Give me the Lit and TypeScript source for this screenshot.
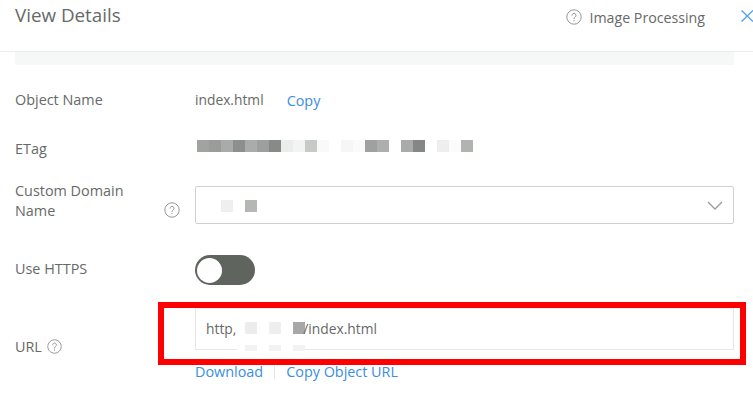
import { LitElement, html, css } from "lit";
import { customElement } from "lit/decorators.js";

const help = (size: number) => html`<svg class="help" width=${size} height=${size} viewBox="0 0 16 16" fill="none">
  <circle cx="8" cy="8" r="7.2" stroke="#8a8a8a" stroke-width="0.9"/>
  <path d="M6 6.3a2 2 0 1 1 3.1 1.7c-.7.5-1.1.9-1.1 1.7" stroke="#8a8a8a" stroke-width="0.9" stroke-linecap="round"/>
  <circle cx="8" cy="11.6" r=".6" fill="#8a8a8a"/>
</svg>`;

const etag = ["#a1a3a1","#999c99","#a9abaa","#8b908c","#aaacab","#9c9f9d","#868b87","#ebecec","#f2f4f3","#c5cac7","#f9f9f9","#fff","#f5f6f5","#fafafa","#9fa1a0","#adafae","#fff","#a9abaa","#858786","#fff","#eeeeee","#fbfbfb","#b1b3b1"];

const mosaic = (colors: string[]) => html`<div class="mosaic">${colors.map((c) => html`<i style="background:${c}"></i>`)}</div>`;

@customElement("app-root")
export class AppRoot extends LitElement {
  static styles = css`
    :host { display: block; width: 753px; height: 401px; overflow: hidden; background: #fff; position: relative;
      font-family: "Open Sans", "Liberation Sans", sans-serif; font-size: 14.4px; color: #666a67; }
    .head { height: 52px; box-sizing: border-box; border-bottom: 1px solid #eeeeee; display: flex; align-items: flex-start; padding-left: 15px; }
    .title { font-size: 18.8px; line-height: 31px; }
    .tools { margin-left: auto; display: flex; align-items: center; gap: 8px; height: 34px; font-size: 14.2px; }
    .close { margin-left: 28px; margin-bottom: 3px; width: 12px; height: 14px; display: block; }
    .body { padding: 0 19px 0 15px; }
    .notice { height: 13px; background: #f5f8f6; margin-bottom: 20px; }
    .row { display: grid; grid-template-columns: 180px 1fr; align-items: center; }
    .label { display: block; line-height: 20px; }
    .r1 { height: 30px; margin-bottom: 20px; }
    .r2 { height: 30px; margin-bottom: 16px; }
    .r2 .label { margin-bottom: 2px; }
    .r2 .mosaic { margin: 0 0 8px 2px; }
    .r3 { height: 43px; margin-bottom: 31px; align-items: start; }
    .r4 { height: 30px; margin-bottom: 23px; }
    .r4 .label { margin-bottom: 2px; }
    .inline { display: flex; align-items: center; gap: 23px; }
    .name { font-size: 13.8px; margin-bottom: 1px; }
    a { color: #3b8ee0; text-decoration: none; }
    .mosaic { display: flex; }
    .mosaic i { width: 12px; height: 12px; display: block; }
    .domainlabel { display: flex; align-items: flex-end; justify-content: space-between; width: 165px; }
    .domainlabel svg { margin-bottom: 3px; }
    .select { height: 38px; margin-top: 5px; box-sizing: border-box; border: 1px solid #cfd1d1; border-radius: 2px; display: flex; align-items: center; justify-content: space-between; padding: 0 10px 0 25px; }
    .select .mosaic { margin-top: 2px; }
    .select .mosaic i { margin-right: 12px; }
    .switch { width: 60px; height: 30px; border-radius: 15px; background: #5f645f; display: flex; align-items: center; padding-left: 2px; box-sizing: border-box; }
    .knob { width: 25px; height: 25px; border-radius: 50%; background: #fff; }
    .url { height: 42px; box-sizing: border-box; border: 1px solid #e6e8e7; border-top-color: #efefef; display: flex; align-items: center; padding-left: 10px; font-size: 13.8px; position: relative; }
    .url > span { margin-bottom: 2px; }
    .url .mosaic { margin-left: 9px; margin-right: -12px; margin-bottom: 2px; }
    .url .mosaic i { margin-right: 12px; }
    .url .mosaic i:last-child { margin-right: 0; }
    .url .tail { position: relative; margin-left: 10px; }
    .cover { position: absolute; left: 41px; top: 34px; width: 68px; height: 8px; background: #fff; padding: 2px 0 0 8px; box-sizing: border-box; }
    .cover .mosaic { margin: 0; }
    .cover .mosaic i { height: 6px; }
    .links { display: flex; align-items: center; margin-top: 12px; line-height: 20px; }
    .sep { width: 1px; height: 13px; background: #e5e5e5; margin: 0 11px; }
    .urlrow { display: grid; grid-template-columns: 180px 1fr; }
    .urllabel { display: flex; align-items: center; gap: 5px; height: 20px; margin-top: 28px; }
    .mark { position: absolute; left: 158px; top: 302px; width: 588px; height: 63px; box-sizing: border-box; border: 6px solid #ff0000; pointer-events: none; }
  `;

  render() {
    return html`
      <div class="head">
        <div class="title">View Details</div>
        <div class="tools">
          ${help(16)}
          <span>Image Processing</span>
          <svg class="close" viewBox="0 0 12 14" fill="none"><path d="M0.6 1.5 12 12.5M12 1.5 0.6 12.5" stroke="#4a9be8" stroke-width="1.2"/></svg>
        </div>
      </div>
      <div class="body">
        <div class="notice"></div>
        <div class="row r1">
          <div class="label">Object Name</div>
          <div class="inline"><span class="name">index.html</span><a>Copy</a></div>
        </div>
        <div class="row r2">
          <div class="label">ETag</div>
          ${mosaic(etag)}
        </div>
        <div class="row r3">
          <div class="domainlabel">
            <div class="label">Custom Domain<br />Name</div>
            ${help(16)}
          </div>
          <div class="select">
            ${mosaic(["#eeefee", "#b5b7b5"])}
            <svg width="16" height="9" viewBox="0 0 16 9" fill="none"><path d="M1 1l7 7 7-7" stroke="#999b9a" stroke-width="1.3"/></svg>
          </div>
        </div>
        <div class="row r4">
          <div class="label">Use HTTPS</div>
          <div class="switch"><div class="knob"></div></div>
        </div>
        <div class="urlrow">
          <div class="urllabel">URL ${help(15)}</div>
          <div>
            <div class="url">
              <span>http,</span>
              ${mosaic(["#ececec", "#eeeeee", "#a8a8a8"])}
              <span class="tail">/index.html</span>
              <div class="cover">${mosaic(["#f2f2f2", "#f2f2f2", "#f2f2f2"])}</div>
            </div>
            <div class="links"><a>Download</a><span class="sep"></span><a>Copy Object URL</a></div>
          </div>
        </div>
      </div>
      <div class="mark"></div>
    `;
  }
}
